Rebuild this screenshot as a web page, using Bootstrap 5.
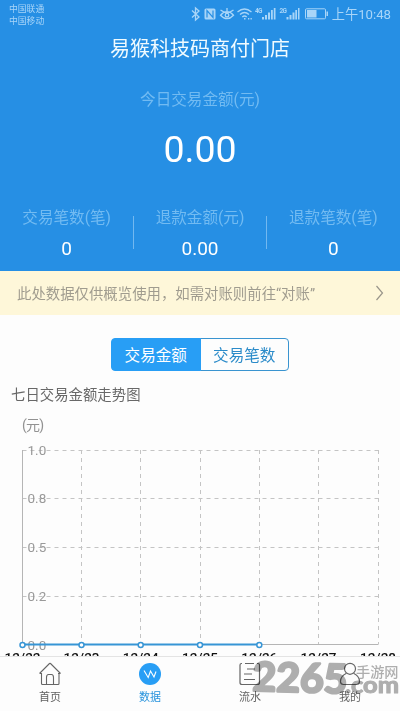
<!DOCTYPE html>
<html lang="zh-CN">
<head>
<meta charset="utf-8">
<meta name="viewport" content="width=device-width, initial-scale=1">
<title>易猴科技码商付门店</title>
<link href="https://cdn.jsdelivr.net/npm/bootstrap@5.3.0/dist/css/bootstrap.min.css" rel="stylesheet">
<style>
body{font-family:Roboto,"Noto Sans CJK SC",sans-serif;color:#666;background:#fdfdfd;height:711px;line-height:1}
.app{height:711px}
.hero{height:271px;background:#268fe4;color:#fff}
.status{height:28px;color:#a8d5f8;padding:4px 9px 0}
.carrier{font-size:8.8px;line-height:12px;margin-top:-1px}
.clock{font-size:13.2px;line-height:15px;padding-top:3px}
.title{font-size:20px;line-height:24px;margin-top:9px;color:#f0fbff}
.dim{color:#72bbf2;font-size:15.6px;line-height:20px}
.today{margin-top:28px;padding-top:1px}
.total{font-size:37.5px;line-height:40px;margin-top:19px}
.stats{margin-top:38px}
.stat{width:134px}
.stat .dim{padding-top:1px}
.stat .val{font-size:19px;line-height:22px;margin-top:10px}
.rule{width:1px;height:33px;background:#72b8f0;margin:9px -.5px 0}
.notice{height:44px;background:#fef7d9;color:#a09c8f;font-size:14.4px;padding:0 16px 0 17px}
.notice span{padding-top:4px}
.tabs{width:178px;height:33px;margin-top:23px}
.tabs .btn{--bs-btn-color:#2b8bc9;--bs-btn-border-color:#3a94d0;--bs-btn-active-bg:#289ef5;--bs-btn-active-border-color:#289ef5;--bs-btn-active-color:#fff;--bs-btn-font-size:15.6px;--bs-btn-border-radius:4px;width:50%;padding:4px 0 0;line-height:25px}
.chart-title{font-size:14.4px;line-height:20px;margin:15px 0 0 11px;height:19px;color:#686868}
.tabbar{height:55px;background:#fdfdfd;border-top:1px solid #e4e4e4}
.tabbar .item{width:100px;font-size:11px;line-height:14px;color:#616161;padding-top:5px}
.tabbar .item.current{color:#2893dc}
.tabbar svg{margin-bottom:5px}
.watermark{left:248px;top:655px;pointer-events:none;mix-blend-mode:multiply}
</style>
</head>
<body>
<div class="app d-flex flex-column overflow-hidden position-relative">
  <header class="hero flex-shrink-0 text-center">
    <div class="status d-flex justify-content-between align-items-start">
      <div class="carrier text-start"><div>中国联通</div><div>中国移动</div></div>
      <div class="d-flex align-items-start">
        <svg width="142" height="18" viewBox="190 4 142 18" fill="none" stroke="#a8d5f8" stroke-width="1.3">
          <path d="M192 10.500l7 6.500-3.500 3V8l3.500 3-7 6.500"/>
          <rect x="204.500" y="8.500" width="11" height="11" rx="1.500" fill="#a8d5f8" stroke="none"/>
          <path d="M207 17.500v-7l6 7v-7" stroke="#268fe4" stroke-width="1.200"/>
          <path d="M220.500 10q6.500 5 13 0M220.500 15.200q6.500-7 13 0-6.500 7-13 0zM227 8v3.500"/><circle cx="227" cy="15.200" r="1.800"/>
          <path d="M237.500 12q7-6 14 0M240 14.500q4.500-4 9 0M242.300 17q2.200-2 4.400 0"/><path d="M244 18.800h1.500M248 18.800h1.300M250.500 18.800h1.300" stroke-width="1.500"/>
          <g fill="#a8d5f8" stroke="none"><path d="M262 17h2v2.500h-2zM265 15h2v4.500h-2zM268 12.500h2v7h-2zM271 10h1.800v9.500H271zM273.800 8h1.700v11.500h-1.700z"/><path d="M286.500 17h2v2.500h-2zM289.500 15h2v4.500h-2zM292.500 12.500h2v7h-2zM295.300 10h1.700v9.500h-1.700zM298 8h1.500v11.500H298z"/>
          <text x="255" y="12.500" font-size="6.500" font-weight="bold" textLength="7.500">4G</text><text x="279.500" y="12.500" font-size="6.500" font-weight="bold" textLength="7.500">2G</text>
          <path d="M307 10h9.500v7.500H307zM326.500 11.500h1.500v4.500h-1.500z"/></g>
          <rect x="305.500" y="8.800" width="20" height="10" rx="1" stroke-width="1"/>
        </svg>
        <span class="clock text-nowrap">上午10:48</span>
      </div>
    </div>
    <h1 class="title mb-0 fw-normal">易猴科技码商付门店</h1>
    <div class="dim today">今日交易金额(元)</div>
    <div class="total">0.00</div>
    <div class="stats d-flex justify-content-center">
      <div class="stat"><div class="dim">交易笔数(笔)</div><div class="val">0</div></div>
      <div class="rule"></div>
      <div class="stat"><div class="dim">退款金额(元)</div><div class="val">0.00</div></div>
      <div class="rule"></div>
      <div class="stat"><div class="dim">退款笔数(笔)</div><div class="val">0</div></div>
    </div>
  </header>
  <a class="notice flex-shrink-0 d-flex align-items-center justify-content-between text-decoration-none" href="#">
    <span class="text-nowrap">此处数据仅供概览使用，如需对账则前往“对账”</span>
    <svg width="9" height="16" fill="none" stroke="#99958a" stroke-width="1.200"><path d="M1.500 1L7.500 8l-6 7"/></svg>
  </a>
  <div class="tabs btn-group align-self-center flex-shrink-0">
    <button class="btn active" type="button">交易金额</button>
    <button class="btn" type="button">交易笔数</button>
  </div>
  <h2 class="chart-title mb-0 fw-normal flex-shrink-0">七日交易金额走势图</h2>
  <svg class="chart flex-shrink-0" width="400" height="251" viewBox="0 405 400 251" font-size="14.500">
    <text x="22" y="429.500" font-size="14" fill="#929292" textLength="22">(元)</text>
    <g stroke="#c4c4c4" stroke-dasharray="4 4" fill="none">
      <path d="M22.500 450.500H378M22.500 498.500H378M22.500 547.500H378M22.500 596.500H378"/>
      <path d="M81.500 450v194M140.500 450v194M200.500 450v194M259.500 450v194M318.500 450v194M378.500 450v194"/>
    </g>
    <path d="M22.500 450v194.500H378.500" stroke="#b5b5b5" fill="none"/>
    <g fill="#999" font-size="13.500"><text x="27.500" y="454.500">1.0</text><text x="27.500" y="503">0.8</text><text x="27.500" y="552">0.5</text><text x="27.500" y="601">0.2</text><text x="27.500" y="649.500">0.0</text></g>
    <path d="M22.500 644.500H259.500" stroke="#3795d5" stroke-width="2"/>
    <g fill="#fff" stroke="#3795d5" stroke-width="1.500"><circle cx="22.500" cy="645" r="2.500"/><circle cx="81.500" cy="645" r="2.500"/><circle cx="140.700" cy="645" r="2.500"/><circle cx="200" cy="645" r="2.500"/><circle cx="259.300" cy="645" r="2.500"/></g>
    <g fill="#111" text-anchor="middle" font-size="13.500" font-weight="500"><text x="22.500" y="662">12/22</text><text x="81.500" y="662">12/23</text><text x="140.700" y="662">12/24</text><text x="200" y="662">12/25</text><text x="259.300" y="662">12/26</text><text x="318.500" y="662">12/27</text><text x="378" y="662">12/28</text></g>
  </svg>
  <nav class="tabbar flex-shrink-0 d-flex">
    <div class="item d-flex flex-column align-items-center"><svg width="24" height="24" fill="none" stroke="#666" stroke-width="1.100" stroke-linejoin="round"><path d="M1.500 11.500L11.500 1.500q.5-.5 1 0l10 10M1.500 11.500h2.500M20 11.500h2.500M3.500 11v10.500q0 1 1 1h4v-7q0-3 2-3h3q2 0 2 3v7H20q1 0 1-1V11M8.500 22.500h7"/></svg>首页</div>
    <div class="item current d-flex flex-column align-items-center"><svg width="24" height="24" fill="none"><circle cx="12" cy="12" r="11" fill="#289ef5"/><path d="M6 8.500l4.200 7L12.500 9l3.500 6L18 9.500" stroke="#fff" stroke-width="1.100"/></svg>数据</div>
    <div class="item d-flex flex-column align-items-center"><svg width="24" height="24" fill="none" stroke="#666" stroke-width="1.200"><path d="M4 1.500H3.500q-1.500 0-1.500 1.500v17.500q0 2 2 2h15.500q2 0 2-2V3q0-1.500-1.500-1.500h-1M7 1.500h9M9 7h8M6 12h8M6 17.500h11"/></svg>流水</div>
    <div class="item d-flex flex-column align-items-center"><svg width="24" height="24" fill="none" stroke="#666" stroke-width="1.200"><circle cx="12" cy="6.800" r="5.500"/><path d="M8.500 11.200C4.500 13 2.500 16 2.500 19.500q0 3 3 3h13q3 0 3-3c0-3.500-2-6.500-6-8.300"/></svg>我的</div>
  </nav>
  <svg class="watermark position-absolute" width="152" height="44" viewBox="248 655 152 44" fill="#b0b0b0" stroke="#b0b0b0" stroke-linejoin="round">
    <text x="252.500" y="692" font-family="Lato" font-size="40" font-weight="700" stroke-width="2.500" textLength="95" lengthAdjust="spacingAndGlyphs" transform="rotate(1.500 298 678)">2265</text>
    <text x="356" y="677" font-size="14.200" font-weight="500" stroke="none" textLength="42.500">手游网</text>
    <text x="345" y="692.500" font-family="Lato" font-size="22" font-weight="700" stroke-width="1" textLength="54" lengthAdjust="spacingAndGlyphs">.com</text>
  </svg>
</div>
<script src="https://cdn.jsdelivr.net/npm/bootstrap@5.3.0/dist/js/bootstrap.bundle.min.js"></script>
</body>
</html>
